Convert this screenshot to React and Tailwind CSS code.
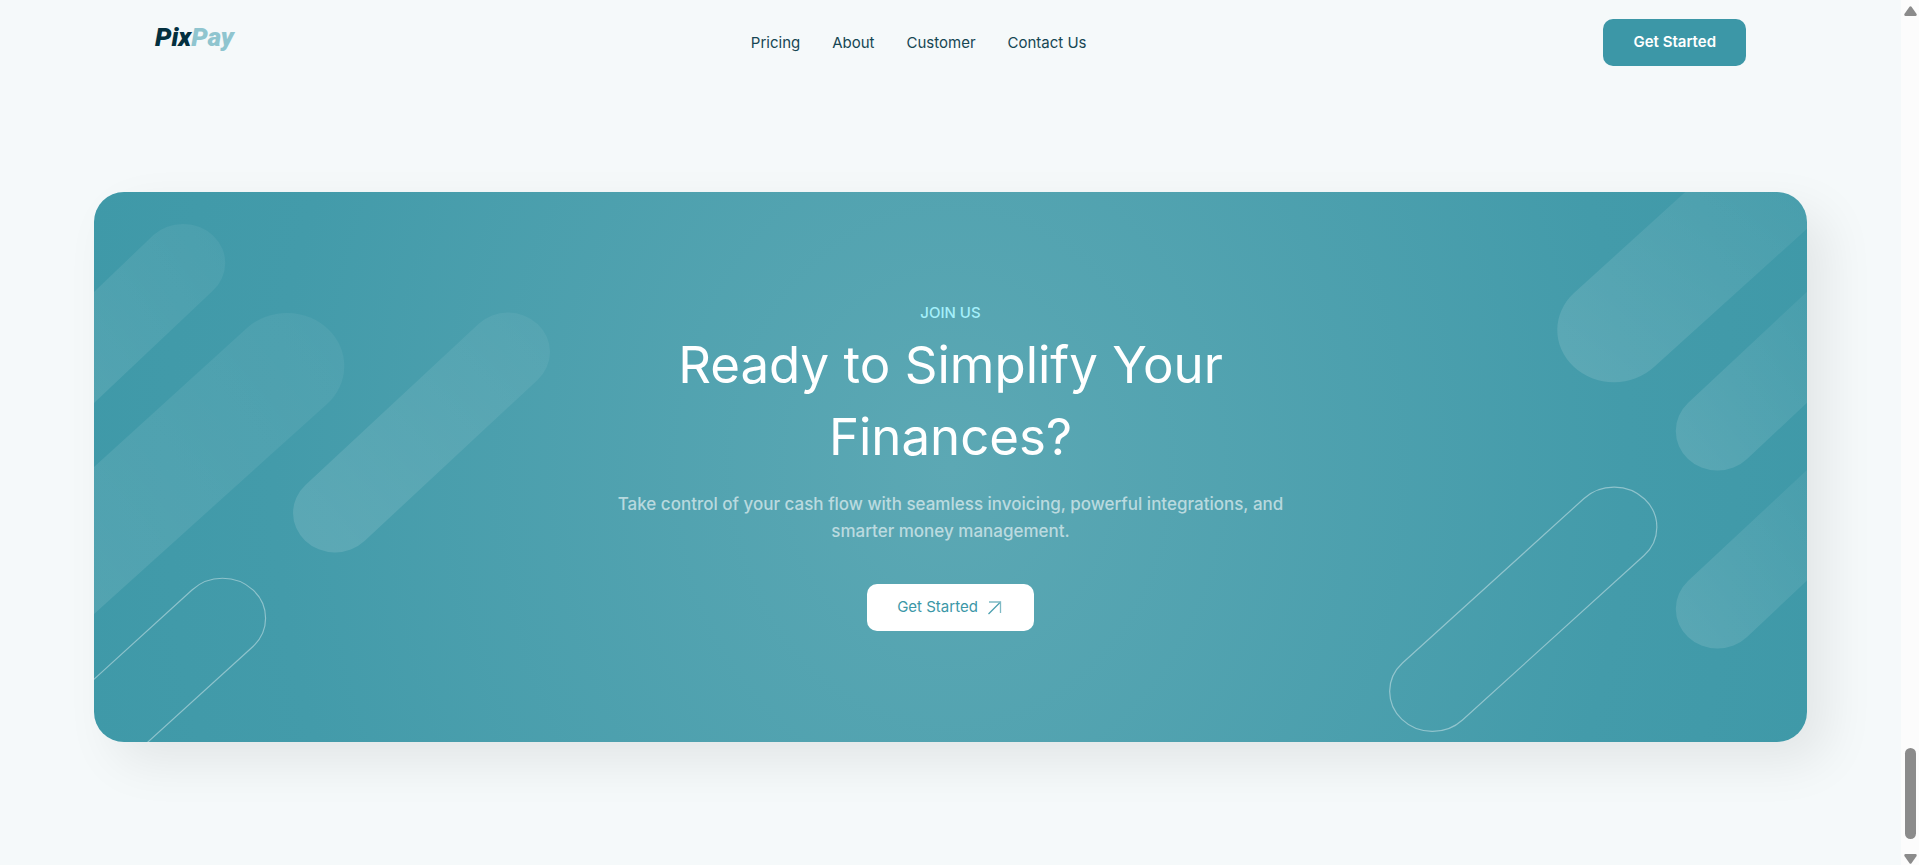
const NAV_ITEMS = ["Pricing", "About", "Customer", "Contact Us"];

function Logo() {
  return (
    <a
      href="#home"
      className="mb-3 block font-['Roboto','Noto_Sans',sans-serif] text-[26px] leading-8 font-black italic"
    >
      <span className="text-[#03303f]">Pix</span>
      <span className="text-[#8fc5cf]">Pay</span>
    </a>
  );
}

function Header() {
  return (
    <header className="flex items-center justify-between px-[155px] pt-[19px]">
      <Logo />
      <nav aria-label="Main">
        <ul className="flex gap-8">
          {NAV_ITEMS.map((item) => (
            <li key={item}>
              <a href="#section" className="block text-[15px] leading-6 text-[#164653]">
                {item}
              </a>
            </li>
          ))}
        </ul>
      </nav>
      <button
        type="button"
        className="h-[47px] rounded-[10px] bg-[#3c97a7] px-[30px] text-[15px] font-semibold text-white"
      >
        Get Started
      </button>
    </header>
  );
}

function PillGradient({ id, strength }) {
  return (
    <linearGradient id={id} x1="1" y1="0" x2="0" y2="1">
      <stop offset="0" stopColor="#fff" stopOpacity="0.05" />
      <stop offset="1" stopColor="#fff" stopOpacity={strength} />
    </linearGradient>
  );
}

function LeftPills() {
  return (
    <svg
      aria-hidden="true"
      viewBox="0 0 460 550"
      className="absolute top-0 left-0 h-[550px] w-[460px]"
    >
      <defs>
        <PillGradient id="pill-faint" strength="0.1" />
        <PillGradient id="pill-left" strength="0.13" />
      </defs>
      <g fill="url(#pill-faint)">
        <path d="M0 100 L59.500 43 A41 38 0 0 1 118.500 99 L0 211Z" />
        <path d="M0 275 L153 136 A55 51 0 0 1 233 212 L0 422Z" />
      </g>
      <path
        d="M384.500 132 A41 38.500 0 0 1 443.500 188 L270.500 349 A41 38.500 0 0 1 211.500 293Z"
        fill="url(#pill-left)"
      />
      <path
        d="M-20 505.500 L98 398 A42 39 0 0 1 159 454.500 L33 569"
        fill="none"
        stroke="#fff"
        strokeOpacity="0.4"
        strokeWidth="1.200"
      />
    </svg>
  );
}

function RightPills() {
  return (
    <svg
      aria-hidden="true"
      viewBox="0 0 430 550"
      className="absolute top-0 right-0 h-[550px] w-[430px]"
    >
      <defs>
        <PillGradient id="pill-right" strength="0.13" />
      </defs>
      <g fill="url(#pill-right)">
        <path d="M308.300 0 L197 101 A55 50.600 0 0 0 277 175 L430 36.700 V0Z" />
        <path d="M430 99.700 L311 211 A40 38 0 0 0 370 267 L430 210.700Z" />
        <path d="M430 278 L311 389 A40 38 0 0 0 370 445 L430 388.500Z" />
      </g>
      <path
        d="M207 306.500 A41 38.200 0 0 1 267 363.500 L85.500 528 A41 38.200 0 0 1 25.500 471Z"
        fill="none"
        stroke="#fff"
        strokeOpacity="0.4"
        strokeWidth="1.200"
      />
    </svg>
  );
}

function ArrowIcon() {
  return (
    <svg aria-hidden="true" viewBox="0 0 20 20" className="size-5" fill="none" strokeWidth="1.300">
      <path d="M4.500 16 L16.500 4" stroke="#4a9fae" />
      <path d="M5 4 H16.500 V15" stroke="#7fbac5" />
    </svg>
  );
}

function CallToAction() {
  return (
    <section className="relative mx-[94px] mt-[126px] flex min-h-[550px] flex-col items-center overflow-hidden rounded-[30px] bg-[radial-gradient(ellipse_52%_190%_at_center,#5ca8b4,#439baa_76%,#3f99a8)] px-6 pt-[109px] text-center shadow-[20px_20px_50px_rgba(0,0,0,0.08)]">
      <LeftPills />
      <RightPills />
      <p className="text-[15px] leading-6 font-medium text-[#a5f0fb]">JOIN US</p>
      <h1 className="mt-1 max-w-[640px] text-[51px] leading-[72px] font-normal text-white">
        Ready to Simplify Your Finances?
      </h1>
      <p className="mt-[18px] max-w-[700px] text-[17px] leading-[27px] font-medium text-white/60">
        Take control of your cash flow with seamless invoicing, powerful integrations, and smarter
        money management.
      </p>
      <button
        type="button"
        className="mt-[39px] flex h-[47px] items-center gap-[6px] rounded-[10px] bg-white px-[30px] text-[15px] text-[#3c97a7]"
      >
        Get Started
        <ArrowIcon />
      </button>
    </section>
  );
}

function ScrollTrack() {
  return (
    <div aria-hidden="true" className="flex w-[18px] shrink-0 flex-col items-center bg-[#fcfcfc] pt-[6px] pb-px">
      <svg viewBox="0 0 13 10" className="h-[10px] w-[13px]" fill="#8b8b8b">
        <path d="M5.500 0.800 Q6.500 -0.400 7.500 0.800 L12.600 8 Q13 10 11.500 10 H1.500 Q0 10 0.400 8Z" />
      </svg>
      <div className="grow" />
      <div className="h-[91px] w-[11px] rounded-full bg-[#8b8b8b]" />
      <svg viewBox="0 0 13 10" className="mt-[15px] h-[10px] w-[13px]" fill="#8b8b8b">
        <path d="M5.500 9.200 Q6.500 10.400 7.500 9.200 L12.600 2 Q13 0 11.500 0 H1.500 Q0 0 0.400 2Z" />
      </svg>
    </div>
  );
}

export default function App() {
  return (
    <div className="flex min-h-screen bg-[#f5f9fa] font-['Inter','Noto_Sans',sans-serif]">
      <main className="min-w-0 grow overflow-hidden">
        <Header />
        <CallToAction />
      </main>
      <ScrollTrack />
    </div>
  );
}
